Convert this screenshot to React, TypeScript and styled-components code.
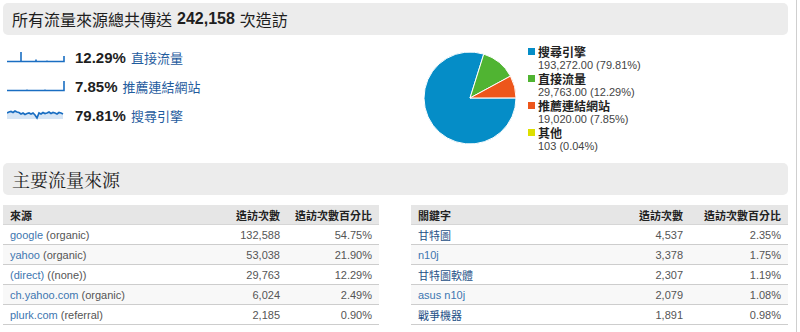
import React from 'react';
import styled, { createGlobalStyle } from 'styled-components';

const GlobalStyle = createGlobalStyle`
  html, body {
    margin: 0;
    padding: 0;
    background: #fff;
  }
  body {
    font-family: 'Liberation Sans', Arial, 'Noto Sans CJK TC', sans-serif;
    color: #333;
  }
`;

const SANS = `'Liberation Sans', Arial, 'Noto Sans CJK TC', sans-serif`;

const Page = styled.div`
  width: 785px;
  height: 329px;
  padding: 3px 8px 0 3px;
  border-right: 1px solid #cfcfcf;
  overflow: hidden;
`;

const SectionHeader = styled.div<{ serif?: boolean }>`
  height: 32px;
  display: flex;
  align-items: center;
  padding-left: 9px;
  background: #ececec;
  border-radius: 5px;
  font-size: ${({ serif }) => (serif ? '18px' : '16px')};
  color: #1e1e1e;
  font-family: ${({ serif }) =>
    serif ? `'Noto Serif CJK TC', 'Noto Sans CJK TC', serif` : SANS};

  b {
    font-weight: bold;
    margin: 0 5px;
  }
`;

const Overview = styled.div`
  height: 128px;
  display: flex;
`;

const SparkColumn = styled.div`
  width: 419px;
  padding-top: 8px;
  display: flex;
  flex-direction: column;
`;

const SparkRow = styled.div`
  height: 29px;
  display: flex;
  align-items: center;
  padding-left: 4px;
  gap: 10px;
`;

const Percent = styled.span`
  font-size: 15px;
  font-weight: bold;
  color: #1e1e1e;
  margin-right: 5px;
`;

const SourceLink = styled.a`
  font-size: 13px;
  color: #1f5c9e;
  text-decoration: none;
`;

const PieBlock = styled.div`
  display: flex;
  gap: 10px;
`;

const PieSvg = styled.svg`
  margin-top: 15px;
`;

const Legend = styled.ul`
  list-style: none;
  margin: 10px 0 0;
  padding: 0;
  display: flex;
  flex-direction: column;
  gap: 1px;
`;

const LegendItem = styled.li`
  display: grid;
  grid-template-columns: 10px auto;
  grid-template-rows: 13px 13px;
  align-items: center;
`;

const Swatch = styled.span<{ color: string }>`
  width: 7px;
  height: 7px;
  background: ${({ color }) => color};
`;

const LegendLabel = styled.span`
  font-size: 12px;
  font-weight: bold;
  color: #222;
`;

const LegendValue = styled.span`
  grid-column: 2;
  font-size: 11px;
  color: #444;
`;

const Tables = styled.div`
  margin-top: 10px;
  display: grid;
  grid-template-columns: 376px 377px;
  gap: 32px;
`;

const Table = styled.div``;

const TableRow = styled.div<{ cols: string; head?: boolean; alt?: boolean }>`
  display: grid;
  grid-template-columns: ${({ cols }) => cols};
  height: 20px;
  box-sizing: border-box;
  align-items: center;
  padding: 0 7px;
  font-size: 11px;
  border-bottom: 1px solid ${({ head }) => (head ? '#d6d6d6' : '#cdcdcd')};
  background: ${({ head, alt }) => (head ? '#e6e6e6' : alt ? '#f8f8f8' : '#fff')};
  color: ${({ head }) => (head ? '#222' : '#555')};
  font-weight: ${({ head }) => (head ? 'bold' : 'normal')};
`;

const Cell = styled.span<{ right?: boolean }>`
  text-align: ${({ right }) => (right ? 'right' : 'left')};
  white-space: nowrap;
`;

const RowLink = styled.a<{ cjk?: boolean }>`
  color: ${({ cjk }) => (cjk ? '#1d4f86' : '#3d76b0')};
  text-decoration: none;
`;

const Medium = styled.span`
  color: #555;
`;

function Sparkline({ kind }: { kind: 'direct' | 'referral' | 'search' }) {
  const stroke = '#1a6ec2';
  if (kind === 'direct') {
    return (
      <svg width={58} height={14} viewBox="0 0 58 14">
        <path d="M0 10.5 H14 V1 V10.5 H29 V8.5 V10.5 H40 V9.6 V10.5 H57 V5" fill="none" stroke={stroke} strokeWidth={1.6} />
      </svg>
    );
  }
  if (kind === 'referral') {
    return (
      <svg width={58} height={14} viewBox="0 0 58 14">
        <path d="M0 10.5 H20 V9.6 V10.5 H38 V9.6 V10.5 H57 V1" fill="none" stroke={stroke} strokeWidth={1.6} />
      </svg>
    );
  }
  const ys = [4, 3, 2.5, 3.5, 2, 3, 3.5, 5, 4, 5.5, 4.5, 4, 5, 4, 6, 9, 4, 5, 3.5, 4.5, 4, 3, 4.5, 3.5, 4, 5, 3.5, 4, 5];
  const pts = ys.map((y, i) => `${i * 2},${y}`).join(' ');
  return (
    <svg width={58} height={14} viewBox="0 0 58 14">
      <polygon points={`0,10 ${pts} 56,10`} fill="#d6e5f5" />
      <polyline points={pts} fill="none" stroke={stroke} strokeWidth={1.7} />
    </svg>
  );
}

const R = 46;
const C = 48;
const pt = (deg: number) => {
  const a = (deg * Math.PI) / 180;
  return `${(C + R * Math.cos(a)).toFixed(2)} ${(C + R * Math.sin(a)).toFixed(2)}`;
};
const slice = (from: number, to: number) =>
  `M${C} ${C} L${pt(from)} A${R} ${R} 0 ${to - from > 180 ? 1 : 0} 1 ${pt(to)} Z`;

const legend = [
  { color: '#058dc7', label: '搜尋引擎', value: '193,272.00 (79.81%)' },
  { color: '#50b432', label: '直接流量', value: '29,763.00 (12.29%)' },
  { color: '#ed561b', label: '推薦連結網站', value: '19,020.00 (7.85%)' },
  { color: '#dddf00', label: '其他', value: '103 (0.04%)' },
];

const sources = [
  { name: 'google', medium: '(organic)', visits: '132,588', pct: '54.75%' },
  { name: 'yahoo', medium: '(organic)', visits: '53,038', pct: '21.90%' },
  { name: '(direct)', medium: '((none))', visits: '29,763', pct: '12.29%' },
  { name: 'ch.yahoo.com', medium: '(organic)', visits: '6,024', pct: '2.49%' },
  { name: 'plurk.com', medium: '(referral)', visits: '2,185', pct: '0.90%' },
];

const keywords = [
  { name: '甘特圖', cjk: true, visits: '4,537', pct: '2.35%' },
  { name: 'n10j', cjk: false, visits: '3,378', pct: '1.75%' },
  { name: '甘特圖軟體', cjk: true, visits: '2,307', pct: '1.19%' },
  { name: 'asus n10j', cjk: false, visits: '2,079', pct: '1.08%' },
  { name: '戰爭機器', cjk: true, visits: '1,891', pct: '0.98%' },
];

const LEFT_COLS = '1fr 80px 92px';
const RIGHT_COLS = '1fr 80px 98px';

export default function App() {
  return (
    <Page>
      <GlobalStyle />
      <SectionHeader>
        所有流量來源總共傳送<b>242,158</b>次造訪
      </SectionHeader>

      <Overview>
        <SparkColumn>
          <SparkRow>
            <Sparkline kind="direct" />
            <span>
              <Percent>12.29%</Percent>
              <SourceLink href="#">直接流量</SourceLink>
            </span>
          </SparkRow>
          <SparkRow>
            <Sparkline kind="referral" />
            <span>
              <Percent>7.85%</Percent>
              <SourceLink href="#">推薦連結網站</SourceLink>
            </span>
          </SparkRow>
          <SparkRow>
            <Sparkline kind="search" />
            <span>
              <Percent>79.81%</Percent>
              <SourceLink href="#">搜尋引擎</SourceLink>
            </span>
          </SparkRow>
        </SparkColumn>

        <PieBlock>
          <PieSvg width={96} height={96} viewBox="0 0 96 96">
            <path d={slice(0, 287.4)} fill="#058dc7" stroke="#fff" strokeWidth={1} />
            <path d={slice(287.4, 331.6)} fill="#50b432" stroke="#fff" strokeWidth={1} />
            <path d={slice(331.6, 359.86)} fill="#ed561b" stroke="#fff" strokeWidth={1} />
          </PieSvg>
          <Legend>
            {legend.map((l) => (
              <LegendItem key={l.label}>
                <Swatch color={l.color} />
                <LegendLabel>{l.label}</LegendLabel>
                <LegendValue>{l.value}</LegendValue>
              </LegendItem>
            ))}
          </Legend>
        </PieBlock>
      </Overview>

      <SectionHeader serif>主要流量來源</SectionHeader>

      <Tables>
        <Table>
          <TableRow cols={LEFT_COLS} head>
            <Cell>來源</Cell>
            <Cell right>造訪次數</Cell>
            <Cell right>造訪次數百分比</Cell>
          </TableRow>
          {sources.map((s, i) => (
            <TableRow cols={LEFT_COLS} alt={i % 2 === 1} key={s.name}>
              <Cell>
                <RowLink href="#">{s.name}</RowLink> <Medium>{s.medium}</Medium>
              </Cell>
              <Cell right>{s.visits}</Cell>
              <Cell right>{s.pct}</Cell>
            </TableRow>
          ))}
        </Table>
        <Table>
          <TableRow cols={RIGHT_COLS} head>
            <Cell>關鍵字</Cell>
            <Cell right>造訪次數</Cell>
            <Cell right>造訪次數百分比</Cell>
          </TableRow>
          {keywords.map((k, i) => (
            <TableRow cols={RIGHT_COLS} alt={i % 2 === 1} key={k.name}>
              <Cell>
                <RowLink href="#" cjk={k.cjk}>
                  {k.name}
                </RowLink>
              </Cell>
              <Cell right>{k.visits}</Cell>
              <Cell right>{k.pct}</Cell>
            </TableRow>
          ))}
        </Table>
      </Tables>
    </Page>
  );
}
